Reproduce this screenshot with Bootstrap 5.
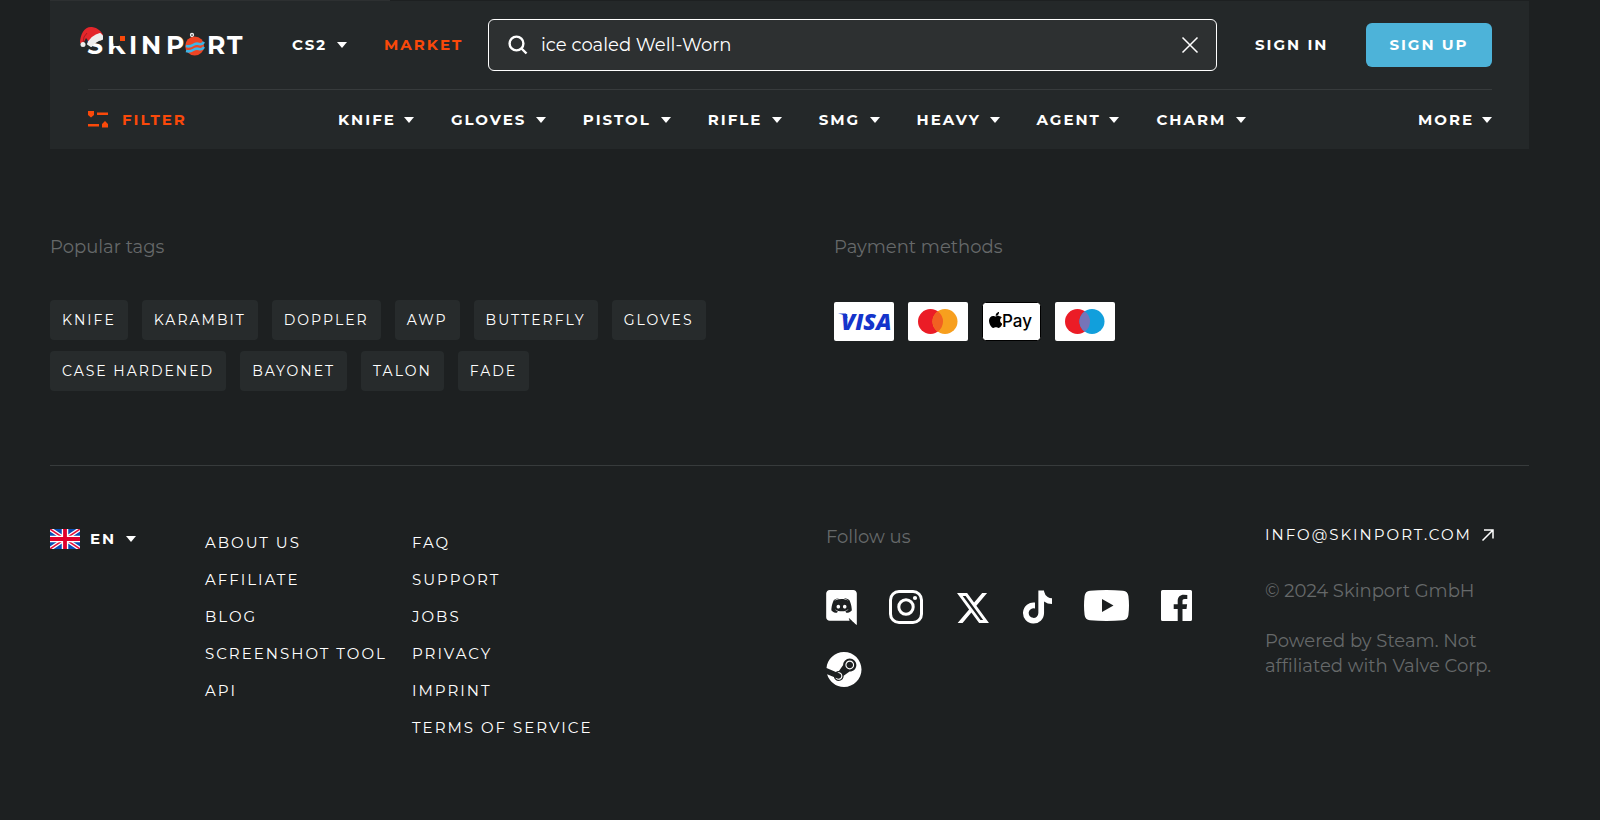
<!DOCTYPE html>
<html lang="en">
<head>
<meta charset="utf-8">
<meta name="viewport" content="width=device-width, initial-scale=1">
<title>Skinport</title>
<link href="https://cdn.jsdelivr.net/npm/bootstrap@5.3.0/dist/css/bootstrap.min.css" rel="stylesheet">
<style>
:root{--page:#1d2021;--panel:#242829;--field:#2d3031;--line:#373b3c;--accent:#fa490a;--dim:#66696a}
body{background:var(--page);color:#fff;font-family:Montserrat,Inter,sans-serif;font-size:18px;line-height:25px;font-weight:400}
.page-wrap{padding-left:50px;padding-right:71px}
.site-head{background:var(--panel)}
.load-track{height:1px;background:var(--page)}
.load-fill{height:1px;background:var(--field)}
.head-main,.head-cats{margin:0 37px 0 38px}
.head-main{height:89px;border-bottom:1px solid var(--line)}
.head-cats{height:59px}
.menu-btn{background:none;border:0;padding:0;color:#fff;font-weight:700;font-size:15px;line-height:24px;letter-spacing:2px;text-decoration:none;display:inline-flex;align-items:center;justify-content:space-between;gap:8px;white-space:nowrap}
.menu-btn.accent{color:var(--accent)}
.menu-btn:hover{color:#b9bcbd}
.tri{width:0;height:0;border:5px solid transparent;border-top:6px solid currentColor;border-bottom:0}
.logo{width:156px;height:36px;overflow:visible;display:block}
.logo text{font-family:Montserrat,Inter,sans-serif;font-weight:700;font-size:25px;fill:#fff}
.game-btn{width:55px}
.market-link{width:80px;margin-left:37px}
.search-box{background:var(--field);border:1px solid #fff;border-radius:6px;height:52px;padding:0 17px 0 19px;margin:0 38px 0 24px}
.search-box input{background:none;border:0;outline:0;color:#fff;min-width:0;padding:0;font-size:18px;font-weight:400;margin:0 16px 0 13px}
.signin{width:74px}
.signup{background:#4db3d9;border-radius:6px;height:44px;width:126px;margin-left:37px;color:#fff;font-weight:700;font-size:15px;letter-spacing:2px;border:0;padding:0 0 2px}
.cats{display:grid;grid-template-columns:76fr 95fr 88fr 74fr 61fr 83fr 83fr 90fr;column-gap:37px;width:64.7%}
.filter-btn{width:250px;justify-content:flex-start;gap:14px}
.dim{color:var(--dim)}
.foot-top{display:grid;grid-template-columns:784fr 695fr;padding-top:86px;padding-bottom:74px;border-bottom:1px solid var(--line)}
.foot-top h2,.foot-bottom h2{font-size:18px;line-height:25px;font-weight:400;margin:0;color:var(--dim)}
.tags{gap:11px 14px;margin-top:40px}
.tag{background:#272b2c;border-radius:4px;color:#fff;font-size:14px;font-weight:400;letter-spacing:2px;line-height:40px;padding:0 12px;text-decoration:none}
.pays{gap:14px;margin-top:42px}
.pays>svg{height:39px;display:block}
.foot-bottom{display:grid;grid-template-columns:155fr 207fr 414fr 439fr 264fr;padding:59px 0 70px}
.foot-links a,.mail{color:#fff;font-size:15px;font-weight:400;line-height:22px;letter-spacing:2px;text-decoration:none;white-space:nowrap}
.foot-links{display:flex;flex-direction:column;gap:15px;padding-top:7px;align-items:flex-start}
.lang{gap:10px;margin-top:2px;align-self:start;justify-self:start}
.socials{gap:27px 32px;margin-top:40px;padding-right:24px}
.socials svg{display:block;fill:#fff}
.socials a{height:35px}
.mail{line-height:20px;margin-bottom:34px}
.contact-copy{margin-bottom:25px}
</style>
</head>
<body>
<div class="page-wrap">
<header class="site-head">
  <div class="load-track"><div class="load-fill" style="width:23%"></div></div>
  <div class="head-main d-flex align-items-center">
    <a href="#" class="flex-shrink-0" aria-label="Skinport">
    <svg class="logo" viewBox="88 26 156 36">
      <text x="87" y="53">S</text><text x="107" y="53">K</text><text x="129" y="53">I</text><text x="141" y="53">N</text><text x="166" y="53">P</text><text x="207" y="53">R</text><text x="227" y="53">T</text>
      <path d="M113.500 34h13v12l-5-3-3 2h-5z" fill="#242829"/>
      <path d="M120 35h5v5h-5z" fill="#fa490a"/>
      <path d="M80 42c0-9 5-17 12-16 6 1 9 4 11 8l-13 8-4-5-3 6z" fill="#e4262b"/>
      <path d="M83 42q0-7 4-10" stroke="#a81c20" stroke-width="1" fill="none"/>
      <path d="M88 43q4-8 12-10l2 2v3q-6 1-11 7z" fill="#eee" stroke="#eee" stroke-width="2" stroke-linejoin="round"/>
      <circle cx="83" cy="43.500" r="2.500" fill="#eee"/>
      <circle cx="192" cy="34" r="1.500" fill="none" stroke="#eee" stroke-width="1.300"/>
      <circle cx="194.700" cy="45" r="9.500" fill="#ee4423"/>
      <path d="M186 45q4 1 7-1t6-1 5-2M186 50q4 1 7-1t6-1 5-2" fill="none" stroke="#3db5e6" stroke-width="2.600"/>
    </svg></a>
    <button class="menu-btn game-btn flex-shrink-0 ms-5">CS2 <span class="tri"></span></button>
    <a href="#" class="menu-btn accent market-link flex-shrink-0">MARKET</a>
    <form class="search-box d-flex align-items-center flex-grow-1" onsubmit="return false">
      <svg width="20" height="20" viewBox="0 0 20 20" fill="none" stroke="#fff" stroke-width="2.400" class="flex-shrink-0"><circle cx="8.500" cy="8.500" r="6.900"/><path d="m13.500 13.500 5 5"/></svg>
      <input class="flex-grow-1" type="text" aria-label="Search" value="ice coaled Well-Worn">
      <button class="border-0 bg-transparent p-0 d-flex" type="button" aria-label="Clear"><svg width="18" height="18" viewBox="0 0 18 18" stroke="#fff" stroke-width="1.500"><path d="m1.500 1.500 15 15m0-15-15 15"/></svg></button>
    </form>
    <a href="#" class="menu-btn signin flex-shrink-0">SIGN IN</a>
    <button class="signup flex-shrink-0">SIGN UP</button>
  </div>
  <nav class="head-cats d-flex align-items-center">
    <button class="menu-btn accent filter-btn flex-shrink-0">
      <svg width="20" height="17" viewBox="0 0 20 17" fill="currentColor"><path d="M0 0h6v4L3 6.500 0 4zM9 1.500h11V4H9zM0 13h11v2.500H0zM14 16.500v-3.500l3-3 3 3v3.500z"/></svg>FILTER</button>
    <div class="cats">
      <button class="menu-btn">KNIFE <span class="tri"></span></button>
      <button class="menu-btn">GLOVES <span class="tri"></span></button>
      <button class="menu-btn">PISTOL <span class="tri"></span></button>
      <button class="menu-btn">RIFLE <span class="tri"></span></button>
      <button class="menu-btn">SMG <span class="tri"></span></button>
      <button class="menu-btn">HEAVY <span class="tri"></span></button>
      <button class="menu-btn">AGENT <span class="tri"></span></button>
      <button class="menu-btn">CHARM <span class="tri"></span></button>
    </div>
    <button class="menu-btn ms-auto">MORE <span class="tri"></span></button>
  </nav>
</header>
<footer>
  <div class="foot-top">
    <section>
      <h2>Popular tags</h2>
      <div class="tags d-flex flex-wrap">
        <a class="tag" href="#">KNIFE</a><a class="tag" href="#">KARAMBIT</a><a class="tag" href="#">DOPPLER</a><a class="tag" href="#">AWP</a><a class="tag" href="#">BUTTERFLY</a><a class="tag" href="#">GLOVES</a><a class="tag" href="#">CASE HARDENED</a><a class="tag" href="#">BAYONET</a><a class="tag" href="#">TALON</a><a class="tag" href="#">FADE</a>
      </div>
    </section>
    <section>
      <h2>Payment methods</h2>
      <div class="pays d-flex flex-wrap">
        <svg width="60" viewBox="0 0 60 39" role="img" aria-label="Visa"><rect width="60" height="39" rx="2" fill="#fff"/><text x="7" y="28" font-family="Open Sans" font-weight="800" font-style="italic" font-size="23" fill="#1434cb">VISA</text><path d="M4 11.500h8l2 5q-3-4-10-5z" fill="#1434cb"/></svg>
        <svg width="60" viewBox="0 0 60 39" role="img" aria-label="Mastercard"><rect width="60" height="39" rx="2" fill="#fff"/><circle cx="22.500" cy="19.500" r="12.500" fill="#eb1c26"/><circle cx="37" cy="19.500" r="12.500" fill="#f79f1e"/><path d="M29.750 9.300a12.500 12.500 0 0 1 0 20.400 12.500 12.500 0 0 1 0-20.400z" fill="#f16022"/></svg>
        <svg width="59" viewBox="0 0 59 39" role="img" aria-label="Apple Pay"><rect x=".5" y=".5" width="58" height="38" rx="3" fill="#fff" stroke="#000"/><svg x="7" y="10" width="13" height="16" viewBox="4 32 368 448"><path d="M318.700 268.700c-.2-36.700 16.400-64.400 50-84.800-18.800-26.900-47.200-41.700-84.700-44.600-35.500-2.800-74.300 20.700-88.500 20.700-15 0-49.400-19.700-76.400-19.700C63.300 141.200 4 184.800 4 273.500q0 39.300 14.400 81.200c12.800 36.700 59 126.700 107.200 125.200 25.200-.6 43-17.900 75.800-17.900 31.800 0 48.300 17.900 76.400 17.900 48.600-.7 90.400-82.500 102.600-119.300-65.200-30.700-61.700-90-61.700-91.900zm-56.600-164.200c27.300-32.400 24.800-61.900 24-72.500-24.100 1.400-52 16.400-67.900 34.900-17.500 19.800-27.800 44.300-25.600 71.900 26.100 2 49.900-11.400 69.500-34.300z"/></svg><text x="20" y="25" font-family="Inter" font-weight="500" font-size="17">Pay</text></svg>
        <svg width="60" viewBox="0 0 60 39" role="img" aria-label="Maestro"><rect width="60" height="39" rx="2" fill="#fff"/><circle cx="22.500" cy="19.500" r="12.500" fill="#eb1c26"/><circle cx="37" cy="19.500" r="12.500" fill="#119fdc"/><path d="M29.750 9.300a12.500 12.500 0 0 1 0 20.400 12.500 12.500 0 0 1 0-20.400z" fill="#7674b8"/></svg>
      </div>
    </section>
  </div>
  <div class="foot-bottom">
    <button class="menu-btn lang">
      <svg width="30" height="20" viewBox="0 0 30 20"><path d="M0 0h30v20H0z" fill="#0a4db3"/><path d="m0 0 30 20M30 0 0 20" stroke="#fff" stroke-width="4"/><path d="m0 0 30 20M30 0 0 20" stroke="#e4103a" stroke-width="1.500"/><path d="M15 0v20M0 10h30" stroke="#fff" stroke-width="6.500"/><path d="M15 0v20M0 10h30" stroke="#e0002b" stroke-width="3.800"/></svg>EN <span class="tri"></span></button>
    <div class="foot-links"><a href="#">ABOUT US</a><a href="#">AFFILIATE</a><a href="#">BLOG</a><a href="#">SCREENSHOT TOOL</a><a href="#">API</a></div>
    <div class="foot-links"><a href="#">FAQ</a><a href="#">SUPPORT</a><a href="#">JOBS</a><a href="#">PRIVACY</a><a href="#">IMPRINT</a><a href="#">TERMS OF SERVICE</a></div>
    <section>
      <h2>Follow us</h2>
      <div class="socials d-flex flex-wrap">
        <a href="#" aria-label="Discord"><svg width="31" height="35" viewBox="0 0 448 512"><path d="M297.216 243.200c0 15.616-11.520 28.416-26.112 28.416-14.336 0-26.112-12.800-26.112-28.416s11.520-28.416 26.112-28.416c14.592 0 26.112 12.800 26.112 28.416zm-119.552-28.416c-14.592 0-26.112 12.800-26.112 28.416s11.776 28.416 26.112 28.416c14.592 0 26.112-12.800 26.112-28.416.256-15.616-11.520-28.416-26.112-28.416zM448 52.736V512c-64.494-56.994-43.868-38.128-118.784-107.776l13.568 47.360H52.480C23.552 451.584 0 428.032 0 398.848V52.736C0 23.552 23.552 0 52.480 0h343.040C424.448 0 448 23.552 448 52.736zm-72.960 242.688c0-82.432-36.864-149.248-36.864-149.248-36.864-27.648-71.936-26.880-71.936-26.880l-3.584 4.096c43.520 13.312 63.744 32.512 63.744 32.512-60.811-33.329-132.244-33.335-191.232-7.424-9.472 4.352-15.104 7.424-15.104 7.424s21.248-20.224 67.328-33.536l-2.560-3.072s-35.072-.768-71.936 26.880c0 0-36.864 66.816-36.864 149.248 0 0 21.504 37.120 78.080 38.912 0 0 9.472-11.520 17.152-21.248-32.512-9.728-44.800-30.208-44.800-30.208 3.766 2.636 9.976 6.053 10.496 6.400 43.210 24.198 104.588 32.126 159.744 8.960 8.960-3.328 18.944-8.192 29.440-15.104 0 0-12.800 20.992-46.336 30.464 7.680 9.728 16.896 20.736 16.896 20.736 56.576-1.792 78.336-38.912 78.336-38.912z"/></svg></a>
        <a href="#" aria-label="Instagram"><svg width="34" height="34" viewBox="0 0 34 34"><g style="fill:none;stroke:#fff;stroke-width:3"><rect x="1.500" y="1.500" width="31" height="31" rx="8.500"/><circle cx="17" cy="17" r="7.200"/></g><circle cx="26" cy="8" r="2.100"/></svg></a>
        <a href="#" aria-label="X"><svg width="36" height="34" viewBox="0 0 36 34"><svg x="2" y="3" width="32" height="30" preserveAspectRatio="none" viewBox="1.250 2.250 21.600 19.500"><path d="M18.244 2.250h3.308l-7.227 8.260 8.502 11.240H16.170l-5.214-6.817L4.990 21.750H1.680l7.730-8.835L1.254 2.250H8.080l4.713 6.231zm-1.161 17.520h1.833L7.084 4.126H5.117z"/></svg></svg></a>
        <a href="#" aria-label="TikTok"><svg width="29" height="34" viewBox="0 0 448 512"><path d="M448 209.910a210.060 210.060 0 0 1-122.770-39.250v178.720A162.550 162.550 0 1 1 185 188.310v89.890a74.620 74.620 0 1 0 52.230 71.180V0h88a121.180 121.180 0 0 0 1.860 22.170A122.180 122.180 0 0 0 381 102.390a121.430 121.430 0 0 0 67 20.140z"/></svg></a>
        <a href="#" aria-label="YouTube"><svg width="45" height="31" viewBox="0 0 45 31"><path fill-rule="evenodd" d="M6 .7Q22.500-.6 39 .7q4.800.4 5.400 5.300 1.200 9.500 0 19-.6 4.900-5.400 5.300-16.500 1.300-33 0Q1.200 29.900.6 25-.6 15.500.6 6 1.200 1.100 6 .7zM18 9v13l11.500-6.500z"/></svg></a>
        <a href="#" aria-label="Facebook"><svg width="31" height="31" viewBox="0 0 31 31"><path d="M1.500 0h28A1.500 1.500 0 0 1 31 1.500v28a1.500 1.500 0 0 1-1.500 1.500h-8V19h4l.6-4.700h-4.600v-3c0-1.400.4-2.300 2.300-2.300h2.500V4.900q-1.200-.2-3.600-.2c-3.500 0-6 2.200-6 6.100v3.500h-4V19h4v12H1.500A1.500 1.500 0 0 1 0 29.500v-28A1.500 1.500 0 0 1 1.500 0z"/></svg></a>
        <a href="#" aria-label="Steam"><svg width="36" height="35" viewBox="0 8 496 496"><path d="M496 256c0 137-111.200 248-248.400 248-113.800 0-209.600-76.300-239-180.400l95.200 39.300c6.400 32.100 34.900 56.400 68.900 56.400 39.200 0 71.900-32.400 70.200-73.500l84.500-60.200c52.100 1.300 95.800-40.900 95.800-93.500 0-51.600-42-93.500-93.700-93.500s-93.700 42-93.700 93.500v1.200L176.600 279c-15.500-.9-30.700 3.400-43.500 12.100L0 236.100C10.200 108.400 117.100 8 247.600 8 384.800 8 496 119 496 256zM155.700 384.300l-30.500-12.600a52.790 52.790 0 0 0 27.200 25.800c26.900 11.200 57.800-1.600 69-28.400 5.400-13 5.500-27.300.1-40.300-5.400-13-15.500-23.200-28.500-28.600-12.900-5.400-26.700-5.200-38.900-.6l31.500 13c19.800 8.200 29.200 30.900 20.900 50.700-8.300 19.900-31 29.200-50.800 21zm173.800-129.900c-34.400 0-62.400-28-62.400-62.300s28-62.300 62.400-62.300 62.400 28 62.400 62.300-27.900 62.300-62.400 62.300zm.1-15.600c25.900 0 46.900-21 46.900-46.800 0-25.900-21-46.800-46.900-46.800s-46.900 21-46.900 46.800c.1 25.800 21.100 46.800 46.900 46.800z"/></svg></a>
      </div>
    </section>
    <address class="mb-0">
      <a class="mail d-flex align-items-center" href="mailto:info@skinport.com">INFO@SKINPORT.COM <svg class="ms-2" width="14" height="12" viewBox="0 0 14 12" fill="none" stroke="#fff" stroke-width="1.500"><path d="M2.500 11.500 13 1M4 1h9v8.500"/></svg></a>
      <p class="dim contact-copy">© 2024 Skinport GmbH</p>
      <p class="dim mb-0">Powered by Steam. Not affiliated with Valve Corp.</p>
    </address>
  </div>
</footer>
</div>
<script src="https://cdn.jsdelivr.net/npm/bootstrap@5.3.0/dist/js/bootstrap.bundle.min.js"></script>
</body>
</html>
